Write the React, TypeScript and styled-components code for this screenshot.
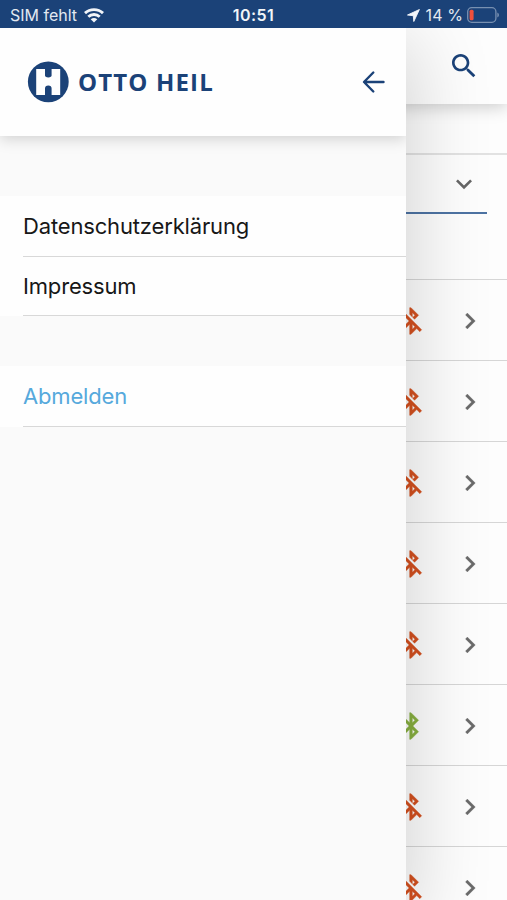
import React from 'react';
import styled, { createGlobalStyle } from 'styled-components';

const Global = createGlobalStyle`
  * { box-sizing: border-box; }
  body { margin: 0; overflow: hidden; font-family: Inter, "Liberation Sans", sans-serif; background: #fdfdfd; }
  svg { display: block; flex: none; }
`;

const navy = '#1b4278';

const Screen = styled.div`
  position: relative;
  display: flex;
  flex-direction: column;
  width: 507px;
  height: 900px;
  overflow: hidden;
`;

const StatusBar = styled.header`
  position: relative;
  z-index: 3;
  display: grid;
  grid-template-columns: 1fr auto 1fr;
  align-items: center;
  height: 28px;
  flex: none;
  padding: 2px 8px 0 10px;
  background: ${navy};
  color: #e3e9f1;
  font-size: 16px;
  line-height: 26px;
`;

const StatusGroup = styled.div<{ $end?: boolean }>`
  display: flex;
  align-items: center;
  justify-content: ${p => (p.$end ? 'flex-end' : 'flex-start')};
  gap: ${p => (p.$end ? '4px' : '7px')};
  white-space: nowrap;
`;

const Carrier = styled.span`letter-spacing: 0;`;
const Charge = styled.span`letter-spacing: 0.1px; margin-left: 2px;`;
const Clock = styled.span`
  margin-right: 2px;
  font-weight: 600;
  letter-spacing: 0.45px;
  color: #f2f5f9;
`;

const Body = styled.div`
  position: relative;
  flex: 1;
  min-height: 0;
`;

const Page = styled.main`
  display: flex;
  flex-direction: column;
  height: 100%;
  overflow: hidden;
  background: #fdfdfd;
`;

const PageHeader = styled.div`
  position: relative;
  z-index: 1;
  display: flex;
  justify-content: flex-end;
  height: 76px;
  flex: none;
  padding: 22px 27px 0 0;
  background: #fdfdfd;
  box-shadow: 0 3px 16px rgba(0, 0, 0, 0.2);
`;

const Strip = styled.div`
  height: 51px;
  flex: none;
  border-bottom: 2px solid #e2e2e2;
`;

const Filter = styled.div`
  height: 125px;
  flex: none;
  padding: 0 20px;
  border-bottom: 1px solid #d6d6d6;
`;

const Select = styled.div`
  display: flex;
  justify-content: flex-end;
  height: 59px;
  padding: 13px 7px 0 0;
  border-bottom: 2px solid #4d73a3;
`;

const DeviceRow = styled.div`
  display: flex;
  align-items: center;
  justify-content: flex-end;
  gap: 27px;
  height: 81px;
  flex: none;
  padding: 1px 21px 0 0;
  border-bottom: 1px solid #d6d6d6;
`;

const Drawer = styled.aside`
  position: absolute;
  z-index: 2;
  top: 0;
  left: 0;
  width: 406px;
  height: 100%;
  background: #fafafa;
  box-shadow: 0 20px 72px 8px rgba(0, 0, 0, 0.17);
`;

const DrawerHeader = styled.div`
  position: relative;
  display: flex;
  align-items: center;
  justify-content: space-between;
  height: 108px;
  padding: 0 20px 0 27px;
  background: #fefefe;
  box-shadow: 0 3px 14px rgba(0, 0, 0, 0.17);
  clip-path: inset(0 0 -40px 0);
`;

const Brand = styled.div`
  display: flex;
  align-items: center;
  gap: 9px;
  color: ${navy};
`;

const BrandName = styled.span`
  padding-bottom: 2px;
  font-family: "Open Sans", sans-serif;
  font-size: 24px;
  font-weight: 700;
  letter-spacing: 1.15px;
  white-space: nowrap;
`;

const Menu = styled.nav<{ $gap: number }>`
  margin-top: ${p => p.$gap}px;
  padding-left: 23px;
  background: #fefefe;
`;

const MenuItem = styled.div<{ $accent?: boolean; $height: number }>`
  display: flex;
  align-items: center;
  height: ${p => p.$height}px;
  border-bottom: 1px solid #d8d8d8;
  color: ${p => (p.$accent ? '#56a9dc' : '#171717')};
  font-size: 22px;
  letter-spacing: -0.16px;
`;

const paths = {
  search: 'M15.5 14h-.79l-.28-.27C15.41 12.59 16 11.11 16 9.5 16 5.91 13.09 3 9.5 3S3 5.91 3 9.5 5.91 16 9.5 16c1.61 0 3.09-.59 4.23-1.57l.27.28v.79l5 4.99L20.49 19l-4.99-5zm-6 0C7.01 14 5 11.99 5 9.5S7.01 5 9.5 5 14 7.01 14 9.5 11.99 14 9.5 14z',
  down: 'M16.59 8.59L12 13.17 7.41 8.59 6 10l6 6 6-6z',
  right: 'M10 6L8.59 7.41 13.17 12l-4.58 4.59L10 18l6-6z',
  off: 'M13 5.83l1.88 1.88-1.6 1.6 1.41 1.41 3.02-3.02L12 2h-1v5.03l2 2v-3.2zM5.41 4L4 5.41 10.59 12 5 17.59 6.41 19 11 14.41V22h1l4.29-4.29 2.3 2.29L20 18.59 5.41 4zM13 18.17v-3.76l1.88 1.88L13 18.17z',
  on: 'M17.71 7.71L12 2h-1v7.59L6.41 5 5 6.41 10.59 12 5 17.59 6.41 19 11 14.41V22h1l5.71-5.71-4.3-4.29 4.3-4.29zM13 5.83l1.88 1.88L13 9.59V5.83zm1.88 10.46L13 18.17v-3.76l1.88 1.88z',
};

const Icon = ({ name, color, weight = 0 }: { name: keyof typeof paths; color: string; weight?: number }) => (
  <svg width="32" height="32" viewBox="0 0 24 24" fill={color} stroke={color} strokeWidth={weight}>
    <path d={paths[name]} />
  </svg>
);

const Wifi = () => (
  <svg width="20" height="15" viewBox="0 0 20 15" fill="none" stroke="#f2f5f9" strokeWidth="2.9">
    <path d="M1 5.1C6 .4 14 .4 19 5.1" />
    <path d="M4.3 8.8C7.5 5.8 12.5 5.8 15.7 8.8" />
    <path d="M10 14.6L6.7 11.3Q10 8.7 13.3 11.3Z" fill="#f2f5f9" stroke="none" />
  </svg>
);

const Location = () => (
  <svg width="13" height="13" viewBox="0 0 13 13" fill="#f2f5f9">
    <path d="M12.4.5L.5 6l5.8.7.5 5.8z" stroke="#f2f5f9" strokeWidth=".9" strokeLinejoin="round" />
  </svg>
);

const Battery = () => (
  <svg width="32" height="16" viewBox="0 0 32 16">
    <rect x=".7" y=".7" width="28.2" height="14.6" rx="4" fill="none" stroke="#7890b1" strokeWidth="1.3" />
    <rect x="2.6" y="2.8" width="4" height="10.4" rx="1.5" fill="#f0503c" />
    <path d="M30.3 5.5q1.7.6 1.7 2.5t-1.7 2.5z" fill="#7890b1" />
  </svg>
);

const Emblem = () => (
  <svg width="42" height="42" viewBox="0 0 42 42">
    <circle cx="21.3" cy="20.8" r="20.4" fill={navy} />
    <path
      d="M9.2 8H18V14.6Q18 16.4 21.3 16.4T24.6 14.6V8H33.2V34H24.6V27.5Q24.6 24.6 21.3 24.6T18 27.5V34H9.2Z"
      fill="#fefefe"
    />
  </svg>
);

const BackArrow = () => (
  <svg width="24" height="24" viewBox="0 0 24 24" fill="none" stroke={navy} strokeWidth="2.4" strokeLinecap="round" strokeLinejoin="round">
    <path d="M21.5 12H2.2M11.3 2.5L2 12l9.3 9.5" />
  </svg>
);

const devices: boolean[] = [false, false, false, false, false, true, false, false];

export default function App() {
  return (
    <Screen>
      <Global />
      <StatusBar>
        <StatusGroup>
          <Carrier>SIM fehlt</Carrier>
          <Wifi />
        </StatusGroup>
        <Clock>10:51</Clock>
        <StatusGroup $end>
          <Location />
          <Charge>14 %</Charge>
          <Battery />
        </StatusGroup>
      </StatusBar>
      <Body>
        <Page>
          <PageHeader>
            <Icon name="search" color={navy} />
          </PageHeader>
          <Strip />
          <Filter>
            <Select>
              <Icon name="down" color="#666" />
            </Select>
          </Filter>
          {devices.map((connected, i) => (
            <DeviceRow key={i}>
              <Icon name={connected ? 'on' : 'off'} color={connected ? '#88b040' : '#d4501f'} weight={0.3} />
              <Icon name="right" color="#6a6a6a" weight={0.2} />
            </DeviceRow>
          ))}
        </Page>
        <Drawer>
          <DrawerHeader>
            <Brand>
              <Emblem />
              <BrandName>OTTO HEIL</BrandName>
            </Brand>
            <BackArrow />
          </DrawerHeader>
          <Menu $gap={60}>
            <MenuItem $height={61}>Datenschutzerklärung</MenuItem>
            <MenuItem $height={59}>Impressum</MenuItem>
          </Menu>
          <Menu $gap={50}>
            <MenuItem $height={61} $accent>Abmelden</MenuItem>
          </Menu>
        </Drawer>
      </Body>
    </Screen>
  );
}
